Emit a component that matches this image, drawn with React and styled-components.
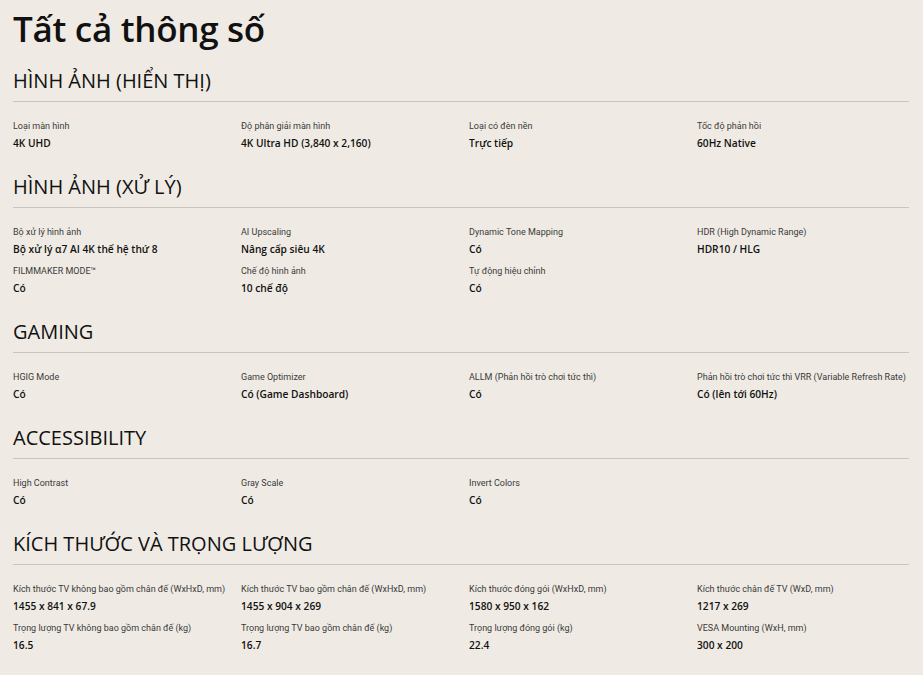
import styled, { createGlobalStyle } from "styled-components";

const GlobalStyle = createGlobalStyle`
  html, body {
    margin: 0;
    padding: 0;
    background-color: #efebe4;
  }
  body {
    font-family: "Open Sans", "Noto Sans", sans-serif;
    color: #111111;
  }
`;

const Pagina = styled.main`
  padding: 6px 14px 20px 13px;
  background-color: #efebe4;
  min-height: 675px;
  box-sizing: border-box;
`;

const Titulo = styled.h1`
  margin: 0;
  font-size: 35px;
  line-height: 46px;
  font-weight: 600;
  color: #111111;
  letter-spacing: -0.3px;
`;

const Seccion = styled.section`
  margin-top: ${(props) => (props.primero ? "15px" : "22px")};
`;

const TituloSeccion = styled.h2`
  margin: 0;
  padding-bottom: 6px;
  font-size: 20px;
  line-height: 28px;
  font-weight: 400;
  color: #111111;
  border-bottom: 1px solid #c9c6c1;
`;

const Grilla = styled.div`
  display: grid;
  grid-template-columns: repeat(4, 212px);
  column-gap: 16px;
  row-gap: 7px;
  padding-top: 17px;
`;

const Dato = styled.div`
  display: flex;
  flex-direction: column;
  gap: 2px;
`;

const Etiqueta = styled.span`
  font-family: Roboto, "Open Sans", sans-serif;
  font-size: 9px;
  line-height: 14px;
  color: #3a3a3a;
  white-space: nowrap;
`;

const Valor = styled.span`
  font-size: 10.2px;
  line-height: 16px;
  font-weight: 600;
  color: #111111;
  white-space: nowrap;
`;

const secciones = [
  {
    titulo: "HÌNH ẢNH (HIỂN THỊ)",
    datos: [
      ["Loại màn hình", "4K UHD"],
      ["Độ phân giải màn hình", "4K Ultra HD (3,840 x 2,160)"],
      ["Loại có đèn nền", "Trực tiếp"],
      ["Tốc độ phản hồi", "60Hz Native"],
    ],
  },
  {
    titulo: "HÌNH ẢNH (XỬ LÝ)",
    datos: [
      ["Bộ xử lý hình ảnh", "Bộ xử lý α7 AI 4K thế hệ thứ 8"],
      ["AI Upscaling", "Nâng cấp siêu 4K"],
      ["Dynamic Tone Mapping", "Có"],
      ["HDR (High Dynamic Range)", "HDR10 / HLG"],
      ["FILMMAKER MODE™", "Có"],
      ["Chế độ hình ảnh", "10 chế độ"],
      ["Tự động hiệu chỉnh", "Có"],
    ],
  },
  {
    titulo: "GAMING",
    datos: [
      ["HGIG Mode", "Có"],
      ["Game Optimizer", "Có (Game Dashboard)"],
      ["ALLM (Phản hồi trò chơi tức thì)", "Có"],
      ["Phản hồi trò chơi tức thì VRR (Variable Refresh Rate)", "Có (lên tới 60Hz)"],
    ],
  },
  {
    titulo: "ACCESSIBILITY",
    datos: [
      ["High Contrast", "Có"],
      ["Gray Scale", "Có"],
      ["Invert Colors", "Có"],
    ],
  },
  {
    titulo: "KÍCH THƯỚC VÀ TRỌNG LƯỢNG",
    datos: [
      ["Kích thước TV không bao gồm chân đế (WxHxD, mm)", "1455 x 841 x 67.9"],
      ["Kích thước TV bao gồm chân đế (WxHxD, mm)", "1455 x 904 x 269"],
      ["Kích thước đóng gói (WxHxD, mm)", "1580 x 950 x 162"],
      ["Kích thước chân đế TV (WxD, mm)", "1217 x 269"],
      ["Trọng lượng TV không bao gồm chân đế (kg)", "16.5"],
      ["Trọng lượng TV bao gồm chân đế (kg)", "16.7"],
      ["Trọng lượng đóng gói (kg)", "22.4"],
      ["VESA Mounting (WxH, mm)", "300 x 200"],
    ],
  },
];

const App = () => {
  return (
    <>
      <GlobalStyle />
      <Pagina>
        <Titulo>Tất cả thông số</Titulo>
        {secciones.map((seccion, i) => (
          <Seccion key={seccion.titulo} primero={i === 0}>
            <TituloSeccion>{seccion.titulo}</TituloSeccion>
            <Grilla>
              {seccion.datos.map(([etiqueta, valor]) => (
                <Dato key={etiqueta}>
                  <Etiqueta>{etiqueta}</Etiqueta>
                  <Valor>{valor}</Valor>
                </Dato>
              ))}
            </Grilla>
          </Seccion>
        ))}
      </Pagina>
    </>
  );
};

export default App;
